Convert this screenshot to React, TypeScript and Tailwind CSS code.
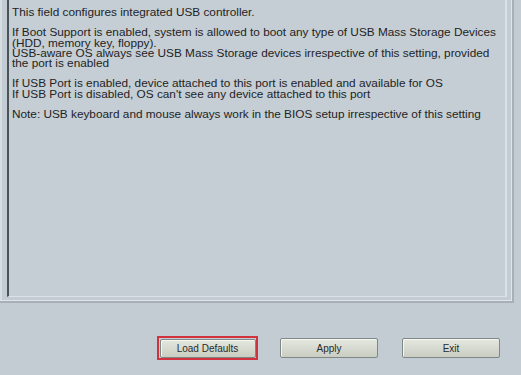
import React from 'react'

const paragraphs: string[][] = [
  ['This field configures integrated USB controller.'],
  [
    'If Boot Support is enabled, system is allowed to boot any type of USB Mass Storage Devices',
    '(HDD, memory key, floppy).',
    'USB-aware OS always see USB Mass Storage devices irrespective of this setting, provided',
    'the port is enabled',
  ],
  [
    'If USB Port is enabled, device attached to this port is enabled and available for OS',
    "If USB Port is disabled, OS can't see any device attached to this port",
  ],
  ['Note: USB keyboard and mouse always work in the BIOS setup irrespective of this setting'],
]

function BiosButton({ label, selected }: { label: string; selected?: boolean }) {
  return (
    <div
      className={`flex items-center justify-center rounded-[2px] border border-[#7f8886] bg-gradient-to-b from-[#e4e8de] to-[#c9cdc2] text-[10px] text-[#2a2a2a] shadow-[inset_1px_1px_0_#f4f6f0] ${
        selected ? 'h-[19px] w-[96px]' : 'h-[20px] w-[98px]'
      }`}
    >
      {label}
    </div>
  )
}

export default function App() {
  return (
    <div className="flex h-[375px] w-[521px] flex-col overflow-hidden bg-[#c2ccd2] font-['Liberation_Sans',Arial,sans-serif]">
      {/* help frame */}
      <div className="h-[303px] w-[514px] border-b-2 border-r-2 border-b-[#a6b0b5] border-r-[#a6b0b5] pl-[7px] shadow-[inset_-1px_-1px_0_#dfe6ea,inset_2px_0_0_#d6dde1]">
        <div className="h-[297px] w-[500px] border-b border-l-2 border-r-2 border-b-[#dbe2e6] border-l-[#4b535a] border-r-[#dbe2e6] bg-[#c4ced4] pl-[3px] pt-[7px] text-[11.8px] leading-[10.2px] text-[#1f2325]">
          {paragraphs.map((lines, i) => (
            <div key={i} className="mb-[10.2px]">
              {lines.map((l, j) => (
                <div key={j} className="whitespace-nowrap">
                  {l}
                </div>
              ))}
            </div>
          ))}
        </div>
      </div>

      {/* buttons */}
      <div className="mt-[33px] flex h-[24px] items-center pl-[157px]">
        <div className="border-2 border-[#d2323e] p-[0.5px]">
          <BiosButton label="Load Defaults" selected />
        </div>
        <div className="ml-[22px]">
          <BiosButton label="Apply" />
        </div>
        <div className="ml-[24px]">
          <BiosButton label="Exit" />
        </div>
      </div>
    </div>
  )
}
